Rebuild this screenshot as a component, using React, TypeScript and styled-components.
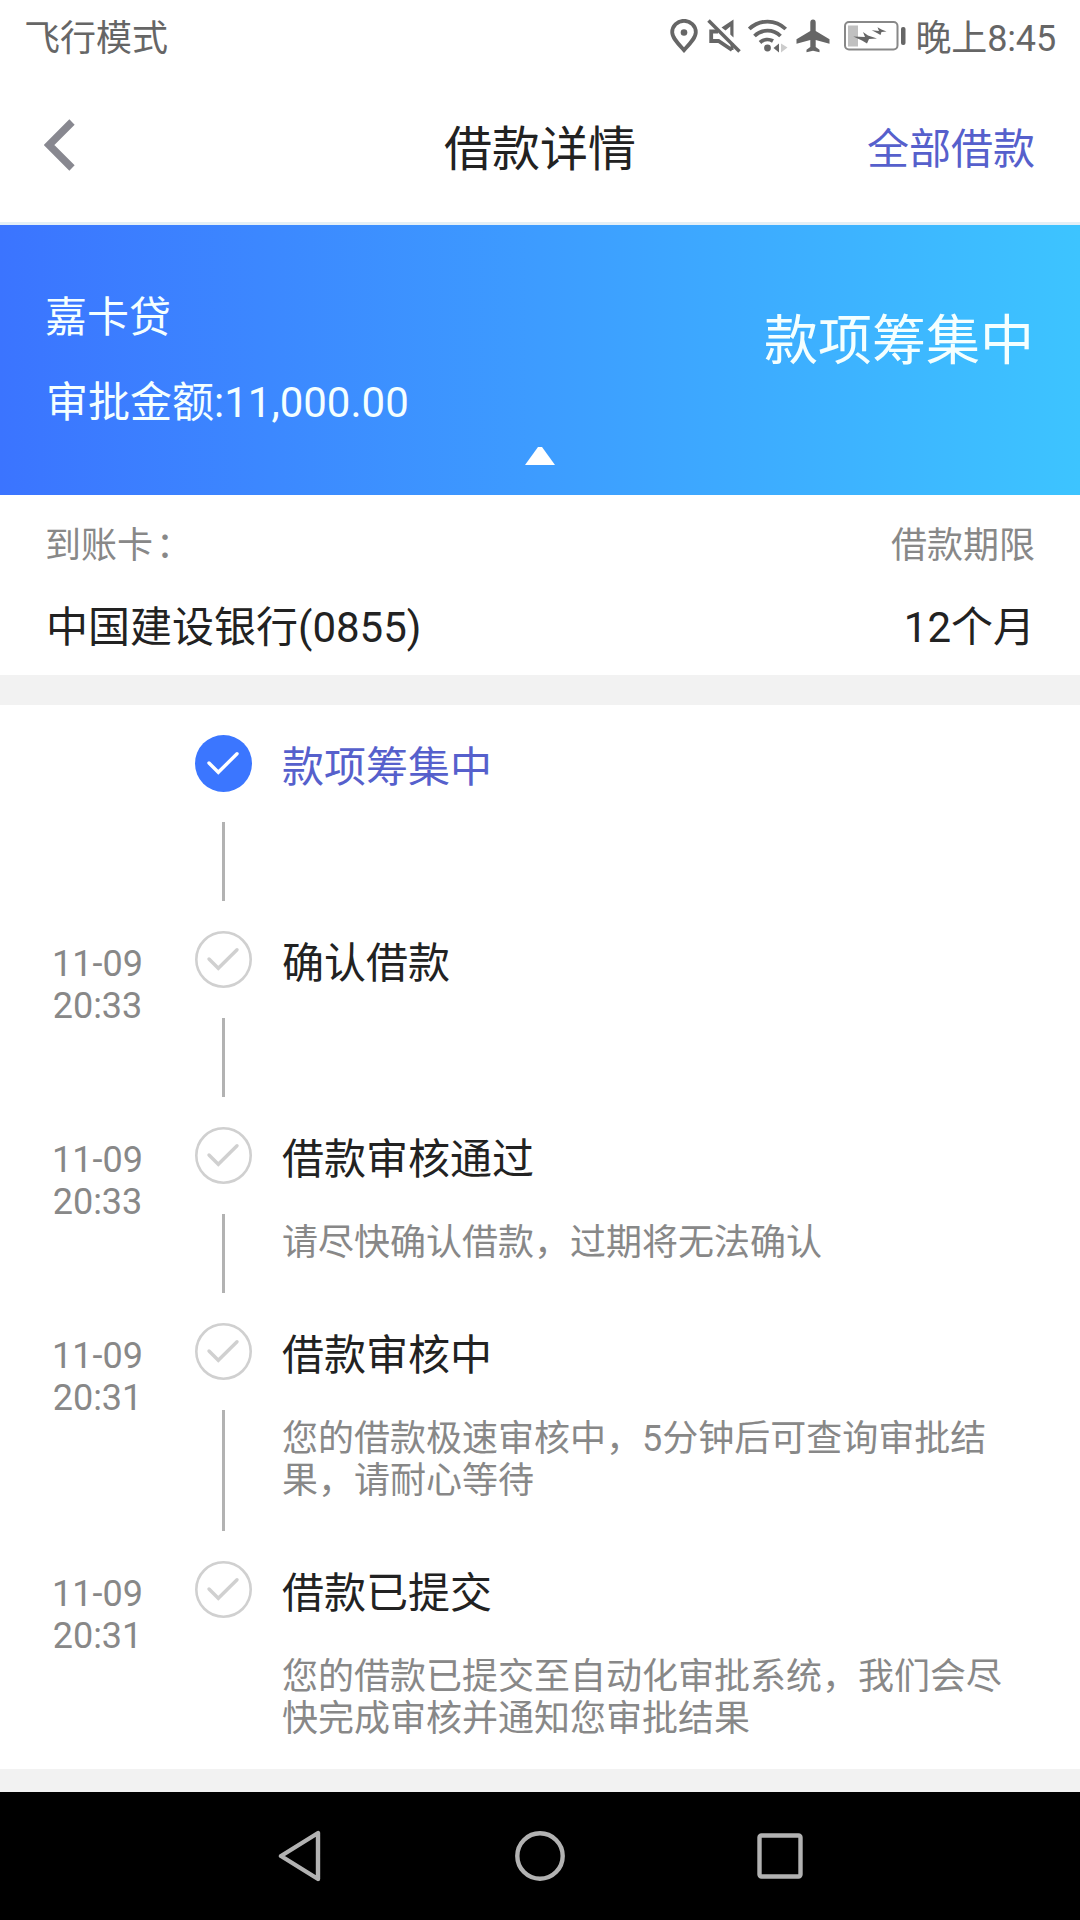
import React from 'react';
import styled, { createGlobalStyle } from 'styled-components';

const GlobalStyle = createGlobalStyle`
  *, *::before, *::after { box-sizing: border-box; }
  body {
    margin: 0;
    background: #f2f2f2;
    font-family: Roboto, 'Noto Sans CJK SC', sans-serif;
    font-weight: 400;
  }
  svg { display: block; flex: none; }
  p, h1 { margin: 0; font-weight: 400; }
`;

const Screen = styled.div`
  width: 1080px;
  height: 1920px;
  display: flex;
  flex-direction: column;
  overflow: hidden;
  background: #f2f2f2;
`;

const StatusBar = styled.div`
  height: 72px;
  padding: 0 24px 0 24px;
  display: flex;
  align-items: center;
  justify-content: space-between;
  background: #fff;
  color: #666;
  font-size: 36px;
  line-height: 42px;
`;

const StatusText = styled.span`
  padding-top: 5px;
`;

const StatusIcons = styled.div`
  display: flex;
  align-items: center;
`;

const IconSlot = styled.span<{ $gap: number }>`
  margin-right: ${(p) => p.$gap}px;
`;

const Clock = styled.span`
  padding-top: 5px;
  letter-spacing: -0.15px;
`;

const Header = styled.header`
  height: 153px;
  padding: 0 45px 0 44px;
  display: grid;
  grid-template-columns: 1fr auto 1fr;
  align-items: center;
  background: #fff;
  border-bottom: 3px solid #e4eff6;
`;

const BackButton = styled.span`
  padding-bottom: 5px;
`;

const Title = styled.h1`
  padding: 5px 0 0 1px;
  font-size: 48px;
  line-height: 56px;
  color: #222;
`;

const HeaderLink = styled.a`
  justify-self: end;
  padding-top: 5px;
  font-size: 42px;
  line-height: 50px;
  color: #5660cc;
`;

const Summary = styled.section`
  height: 270px;
  padding: 68px 46px 30px 45px;
  display: grid;
  grid-template-rows: 50px 50px 18px;
  row-gap: 35px;
  background: linear-gradient(90deg, #3b74ff 0%, #3d9cff 50%, #3dc4ff 100%);
  color: #f4ffff;
  font-size: 42px;
  line-height: 50px;
`;

const SummaryTop = styled.div`
  display: flex;
  justify-content: space-between;
`;

const SummaryStatus = styled.span`
  padding-top: 22px;
  font-size: 54px;
  line-height: 54px;
`;

const Amount = styled.span`
  padding-left: 1px;
`;

const Collapse = styled.div`
  margin-top: -16px;
  display: flex;
  justify-content: center;
`;

const Details = styled.section`
  height: 180px;
  padding: 30px 45px 0;
  display: flex;
  justify-content: space-between;
  background: #fff;
`;

const Field = styled.div<{ $end?: boolean }>`
  display: flex;
  flex-direction: column;
  gap: 36px;
  align-items: ${(p) => (p.$end ? 'flex-end' : 'flex-start')};
`;

const Label = styled.span`
  font-size: 36px;
  line-height: 42px;
  color: #888;
  white-space: nowrap;
`;

const Value = styled.span`
  padding-left: 1px;
  font-size: 42px;
  line-height: 50px;
  color: #222;
`;

const Colon = styled.span`
  padding-left: 3px;
`;

const Timeline = styled.section`
  height: 1064px;
  margin-top: 30px;
  padding-top: 30px;
  background: #fff;
`;

const Step = styled.div<{ $last?: boolean }>`
  display: grid;
  grid-template-columns: 195px 57px 1fr;
  min-height: ${(p) => (p.$last ? 0 : 196)}px;
`;

const Time = styled.div`
  padding-top: 12px;
  display: flex;
  flex-direction: column;
  align-items: center;
  font-size: 36px;
  line-height: 42px;
  color: #888;
`;

const Rail = styled.div`
  display: flex;
  flex-direction: column;
  align-items: center;
`;

const RailLine = styled.div`
  flex: 1;
  width: 3px;
  margin: 30px 0;
  background: #b2b2b2;
`;

const StepBody = styled.div`
  padding: 8px 60px 59px 30px;
`;

const StepTitle = styled.p<{ $active?: boolean }>`
  font-size: 42px;
  line-height: 50px;
  color: ${(p) => (p.$active ? '#5660cc' : '#222')};
`;

const StepText = styled.p`
  margin-top: 37px;
  font-size: 36px;
  line-height: 42px;
  color: #888;
  white-space: pre;
`;

const NavBar = styled.nav`
  height: 128px;
  margin-top: auto;
  display: grid;
  grid-template-columns: repeat(3, 240px);
  justify-content: center;
  justify-items: center;
  align-items: center;
  background: #000;
`;

const PinIcon = () => (
  <svg width="28" height="34" viewBox="0 0 28 34" fill="none">
    <path d="M14 31.2C7.5 24 2.2 18.6 2.2 13.2a11.8 11.4 0 0 1 23.6 0C25.8 18.6 20.5 24 14 31.2Z" stroke="#666" strokeWidth="3.8" />
    <circle cx="14" cy="13.5" r="3.3" fill="#666" />
  </svg>
);

const MuteIcon = () => (
  <svg width="34" height="34" viewBox="0 0 34 34" fill="none" stroke="#666">
    <path d="M1.5 1.5 32.5 32.5" strokeWidth="3.6" />
    <path d="M11 12.5H4.2V22H11.5L25 31" strokeWidth="3.8" />
    <path d="M25 31V24" strokeWidth="3" />
    <path d="M14.5 8.5 26.5 .5V18.5L23.3 15.5V7.5L18.5 11.5Z" fill="#666" stroke="none" />
  </svg>
);

const WifiIcon = () => (
  <svg width="40" height="34" viewBox="0 0 40 34" fill="none" stroke="#666" strokeWidth="3.8">
    <path d="M1.3 10a26 26 0 0 1 36.4 0" />
    <path d="M6.5 17a18.5 18.5 0 0 1 26 0" />
    <path d="M12 23.5a11 11 0 0 1 13-1.5" />
    <circle cx="19.5" cy="29" r="3.4" fill="#666" stroke="none" />
    <path d="M25.5 29 31 24.5V33.5Z" fill="#666" stroke="none" />
    <path d="M33 24.5V33.5L39.5 28.5Z" fill="#ccc" stroke="none" />
  </svg>
);

const PlaneIcon = () => (
  <svg width="34" height="34" viewBox="0 0 34 34" fill="#666">
    <path d="M14.3 3.5a2.7 3 0 0 1 5.4 0V12L33.5 20.3V24.8L19.7 21V28L23.5 30.8V33.2L17 31.8 10.5 33.2V30.8L14.3 28V21L.5 24.8V20.3L14.3 12Z" />
  </svg>
);

const BatteryIcon = () => (
  <svg width="62" height="30" viewBox="0 0 62 30" fill="none">
    <rect x="1" y="1" width="52.5" height="27.5" rx="4" stroke="#888" strokeWidth="2" />
    <rect x="4" y="4.5" width="10" height="21" fill="#c0c0c0" />
    <path d="M9.3 15.5 21 16 19 11 24 14.5 33 17.5 25 18 23 22.5 18 19.5Z" fill="#666" />
    <path d="M27.7 9.3 35 10 33.5 6.3 37.5 8.5 42.5 10.5 37.5 11 36.5 14 33 12Z" fill="#666" />
    <rect x="57" y="6" width="4.5" height="18" rx="2" fill="#666" />
  </svg>
);

const BackIcon = () => (
  <svg width="32" height="52" viewBox="0 0 32 52" fill="none">
    <path d="M28 3 5 26 28 49" stroke="#888890" strokeWidth="7.5" />
  </svg>
);

const CollapseIcon = () => (
  <svg width="30" height="18" viewBox="0 0 30 18">
    <path d="M13 0h4L30 18H0Z" fill="#fff" />
  </svg>
);

const CheckIcon = ({ active }: { active?: boolean }) => (
  <svg width="57" height="57" viewBox="0 0 57 57" fill="none">
    <circle
      cx="28.5"
      cy="28.5"
      r={active ? 28.5 : 27.2}
      fill={active ? '#3b76ff' : 'none'}
      stroke={active ? 'none' : '#d0d0d0'}
      strokeWidth="2.6"
    />
    <path
      d="M14 28 23.3 37.3 42 18.8"
      stroke={active ? '#fff' : '#d0d0d0'}
      strokeWidth="3.4"
      strokeLinecap="round"
    />
  </svg>
);

interface StepData {
  date?: string;
  time?: string;
  title: string;
  text?: string;
}

const steps: StepData[] = [
  { title: '款项筹集中' },
  { date: '11-09', time: '20:33', title: '确认借款' },
  { date: '11-09', time: '20:33', title: '借款审核通过', text: '请尽快确认借款，过期将无法确认' },
  {
    date: '11-09',
    time: '20:31',
    title: '借款审核中',
    text: '您的借款极速审核中，5分钟后可查询审批结\n果，请耐心等待',
  },
  {
    date: '11-09',
    time: '20:31',
    title: '借款已提交',
    text: '您的借款已提交至自动化审批系统，我们会尽\n快完成审核并通知您审批结果',
  },
];

export default function App() {
  return (
    <Screen>
      <GlobalStyle />
      <StatusBar>
        <StatusText>飞行模式</StatusText>
        <StatusIcons>
          <IconSlot $gap={9}><PinIcon /></IconSlot>
          <IconSlot $gap={7}><MuteIcon /></IconSlot>
          <IconSlot $gap={8}><WifiIcon /></IconSlot>
          <IconSlot $gap={14}><PlaneIcon /></IconSlot>
          <IconSlot $gap={9}><BatteryIcon /></IconSlot>
          <Clock>晚上8:45</Clock>
        </StatusIcons>
      </StatusBar>
      <Header>
        <BackButton><BackIcon /></BackButton>
        <Title>借款详情</Title>
        <HeaderLink>全部借款</HeaderLink>
      </Header>
      <Summary>
        <SummaryTop>
          <span>嘉卡贷</span>
          <SummaryStatus>款项筹集中</SummaryStatus>
        </SummaryTop>
        <Amount>审批金额:11,000.00</Amount>
        <Collapse>
          <CollapseIcon />
        </Collapse>
      </Summary>
      <Details>
        <Field>
          <Label>到账卡<Colon>：</Colon></Label>
          <Value>中国建设银行(0855)</Value>
        </Field>
        <Field $end>
          <Label>借款期限</Label>
          <Value>12个月</Value>
        </Field>
      </Details>
      <Timeline>
        {steps.map((step, i) => {
          const last = i === steps.length - 1;
          return (
            <Step key={step.title} $last={last}>
              <Time>
                <span>{step.date}</span>
                <span>{step.time}</span>
              </Time>
              <Rail>
                <CheckIcon active={i === 0} />
                {!last && <RailLine />}
              </Rail>
              <StepBody>
                <StepTitle $active={i === 0}>{step.title}</StepTitle>
                {step.text && <StepText>{step.text}</StepText>}
              </StepBody>
            </Step>
          );
        })}
      </Timeline>
      <NavBar>
        <svg width="44" height="52" viewBox="0 0 44 52" fill="none">
          <path d="M3 26 40 3V49Z" stroke="#b2b2b2" strokeWidth="4.4" strokeLinejoin="round" />
        </svg>
        <svg width="50" height="50" viewBox="0 0 50 50" fill="none">
          <circle cx="25" cy="25" r="22.7" stroke="#b2b2b2" strokeWidth="4.4" />
        </svg>
        <svg width="46" height="46" viewBox="0 0 46 46" fill="none">
          <rect x="2.5" y="2.5" width="41" height="41" rx="2" stroke="#b2b2b2" strokeWidth="4.4" />
        </svg>
      </NavBar>
    </Screen>
  );
}
